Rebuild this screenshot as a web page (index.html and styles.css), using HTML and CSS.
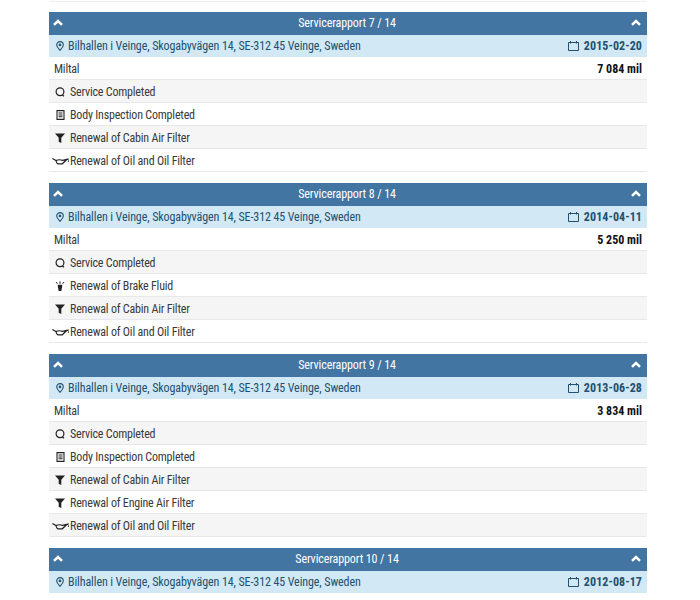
FILE: index.html
```html
<!DOCTYPE html>
<html lang="sv">
<head>
<meta charset="utf-8">
<title>Servicerapporter</title>
<link rel="stylesheet" href="styles.css">
</head>
<body>
<svg class="defs" width="0" height="0" aria-hidden="true">
  <symbol id="i-up" viewBox="0 0 10 7"><path d="M1 5.900 5 2l4 3.900" fill="none" stroke="currentColor" stroke-width="2.500"/></symbol>
  <symbol id="i-pin" viewBox="0 0 8 10"><path d="M4 .6a3.300 3.300 0 0 1 3.300 3.300C7.300 6 5.300 7.900 4 9.300 2.700 7.900.7 6 .7 3.900A3.300 3.300 0 0 1 4 .6z" fill="none" stroke="currentColor" stroke-width="1.100"/><circle cx="4" cy="3.900" r="1.300" fill="currentColor"/></symbol>
  <symbol id="i-cal" viewBox="0 0 11 10"><path d="M.5 1.500h10v8H.5z" fill="none" stroke="currentColor" stroke-width="1"/><path d="M2.500 0v2.500M8.500 0v2.500" stroke="currentColor" stroke-width="1"/></symbol>
  <symbol id="i-ring" viewBox="0 0 10 10"><circle cx="5" cy="4.700" r="3.900" fill="none" stroke="currentColor" stroke-width="1.200"/><path d="M7.200 8 9 9.300" stroke="currentColor" stroke-width="1.200"/></symbol>
  <symbol id="i-doc" viewBox="0 0 9 10"><path d="M1 .6h7v8.800H1z" fill="none" stroke="currentColor" stroke-width="1.100"/><path d="M2.500 2.500h4v1h-4zm0 1.900h4v1h-4zm0 1.900h4v1h-4z" fill="currentColor"/></symbol>
  <symbol id="i-filter" viewBox="0 0 10 10"><path d="M0 .5h10L6.300 4.800V10L3.700 8.800v-4z" fill="currentColor"/></symbol>
  <symbol id="i-oil" viewBox="0 0 17 7"><path d="M.4.600 4 2.600c2-1 4-1.200 6.500-.2L15 1.300 10.300 5.800H6.200C5 5.800 4.400 4.200 4 2.600M15 1.300l1.600.5M16.500 2.600v1.200" fill="none" stroke="currentColor" stroke-width="1.200"/></symbol>
  <symbol id="i-brake" viewBox="0 0 10 11"><path d="M2.800 3.800h4.400v1.700L6.300 10H3.700L2.800 5.500z" fill="currentColor"/><path d="M5 .3v2.500M1 1l1.500 1.800M9 1 7.500 2.800" stroke="currentColor" stroke-width="1"/></symbol>
</svg>

<main class="reports">
  <div class="stub"></div>

  <section class="report">
    <header class="report-head"><svg class="up"><use href="#i-up"/></svg><h2>Servicerapport 7 / 14</h2><svg class="up"><use href="#i-up"/></svg></header>
    <div class="report-place"><span class="place"><svg class="pin"><use href="#i-pin"/></svg>Bilhallen i Veinge, Skogabyvägen 14, SE-312 45 Veinge, Sweden</span><span class="date"><svg class="cal"><use href="#i-cal"/></svg>2015-02-20</span></div>
    <div class="row"><span>Miltal</span><strong>7 084 mil</strong></div>
    <div class="row item"><span class="ico"><svg class="s-ring"><use href="#i-ring"/></svg></span>Service Completed</div>
    <div class="row item"><span class="ico"><svg class="s-doc"><use href="#i-doc"/></svg></span>Body Inspection Completed</div>
    <div class="row item"><span class="ico"><svg class="s-filter"><use href="#i-filter"/></svg></span>Renewal of Cabin Air Filter</div>
    <div class="row item"><span class="ico"><svg class="s-oil"><use href="#i-oil"/></svg></span>Renewal of Oil and Oil Filter</div>
  </section>

  <section class="report">
    <header class="report-head"><svg class="up"><use href="#i-up"/></svg><h2>Servicerapport 8 / 14</h2><svg class="up"><use href="#i-up"/></svg></header>
    <div class="report-place"><span class="place"><svg class="pin"><use href="#i-pin"/></svg>Bilhallen i Veinge, Skogabyvägen 14, SE-312 45 Veinge, Sweden</span><span class="date"><svg class="cal"><use href="#i-cal"/></svg>2014-04-11</span></div>
    <div class="row"><span>Miltal</span><strong>5 250 mil</strong></div>
    <div class="row item"><span class="ico"><svg class="s-ring"><use href="#i-ring"/></svg></span>Service Completed</div>
    <div class="row item"><span class="ico"><svg class="s-brake"><use href="#i-brake"/></svg></span>Renewal of Brake Fluid</div>
    <div class="row item"><span class="ico"><svg class="s-filter"><use href="#i-filter"/></svg></span>Renewal of Cabin Air Filter</div>
    <div class="row item"><span class="ico"><svg class="s-oil"><use href="#i-oil"/></svg></span>Renewal of Oil and Oil Filter</div>
  </section>

  <section class="report">
    <header class="report-head"><svg class="up"><use href="#i-up"/></svg><h2>Servicerapport 9 / 14</h2><svg class="up"><use href="#i-up"/></svg></header>
    <div class="report-place"><span class="place"><svg class="pin"><use href="#i-pin"/></svg>Bilhallen i Veinge, Skogabyvägen 14, SE-312 45 Veinge, Sweden</span><span class="date"><svg class="cal"><use href="#i-cal"/></svg>2013-06-28</span></div>
    <div class="row"><span>Miltal</span><strong>3 834 mil</strong></div>
    <div class="row item"><span class="ico"><svg class="s-ring"><use href="#i-ring"/></svg></span>Service Completed</div>
    <div class="row item"><span class="ico"><svg class="s-doc"><use href="#i-doc"/></svg></span>Body Inspection Completed</div>
    <div class="row item"><span class="ico"><svg class="s-filter"><use href="#i-filter"/></svg></span>Renewal of Cabin Air Filter</div>
    <div class="row item"><span class="ico"><svg class="s-filter"><use href="#i-filter"/></svg></span>Renewal of Engine Air Filter</div>
    <div class="row item"><span class="ico"><svg class="s-oil"><use href="#i-oil"/></svg></span>Renewal of Oil and Oil Filter</div>
  </section>

  <section class="report">
    <header class="report-head"><svg class="up"><use href="#i-up"/></svg><h2>Servicerapport 10 / 14</h2><svg class="up"><use href="#i-up"/></svg></header>
    <div class="report-place"><span class="place"><svg class="pin"><use href="#i-pin"/></svg>Bilhallen i Veinge, Skogabyvägen 14, SE-312 45 Veinge, Sweden</span><span class="date"><svg class="cal"><use href="#i-cal"/></svg>2012-08-17</span></div>
  </section>
</main>
</body>
</html>
```
FILE: styles.css
```css
html, body { margin: 0; padding: 0; background: #fff; height: 600px; overflow: hidden; }
body { font-family: "Roboto Condensed", Roboto, Lato, sans-serif; font-size: 12px; color: #3a3a3a; }
.defs { display: block; }
.reports { width: 598px; margin-left: 49px; display: flex; flex-direction: column; gap: 11px; }
.stub { height: 1px; border-bottom: 1px solid #eee; margin-bottom: -1px; }
.report { display: flex; flex-direction: column; }
.report-head { height: 23px; background: #4375a3; color: #fff; display: flex; align-items: center; justify-content: space-between; padding: 0 6px 2px 4px; box-sizing: border-box; }
.report-head h2 { margin: 0; font-size: 12px; font-weight: 400; letter-spacing: -0.1px; }
.up { width: 10px; height: 7px; }
.report-place { height: 22px; background: #d2e8f5; color: #22506f; display: flex; align-items: center; justify-content: space-between; padding: 0 5px; box-sizing: border-box; letter-spacing: -0.1px; }
.place { display: flex; align-items: center; gap: 4px; }
.pin { width: 8px; height: 10px; margin-left: 2px; }
.date { display: flex; align-items: center; gap: 5px; font-weight: 700; letter-spacing: 0.1px; }
.cal { width: 11px; height: 10px; }
.row { height: 23px; display: flex; align-items: center; justify-content: space-between; padding: 2px 5px 0; box-sizing: border-box; border-bottom: 1px solid #e8e8e8; letter-spacing: -0.2px; }
.row strong { color: #111; letter-spacing: 0; }
.row.item { justify-content: flex-start; }
.row:nth-child(odd) { background: #fff; }
.row:nth-child(even) { background: #f5f5f5; }
.ico { width: 12px; display: flex; justify-content: center; margin-right: 4px; color: #222; }
.ico svg { flex-shrink: 0; }
.s-ring { width: 10px; height: 10px; }
.s-doc { width: 9px; height: 10px; }
.s-filter { width: 10px; height: 10px; }
.s-oil { width: 17px; height: 7px; }
.s-brake { width: 10px; height: 11px; }
```
